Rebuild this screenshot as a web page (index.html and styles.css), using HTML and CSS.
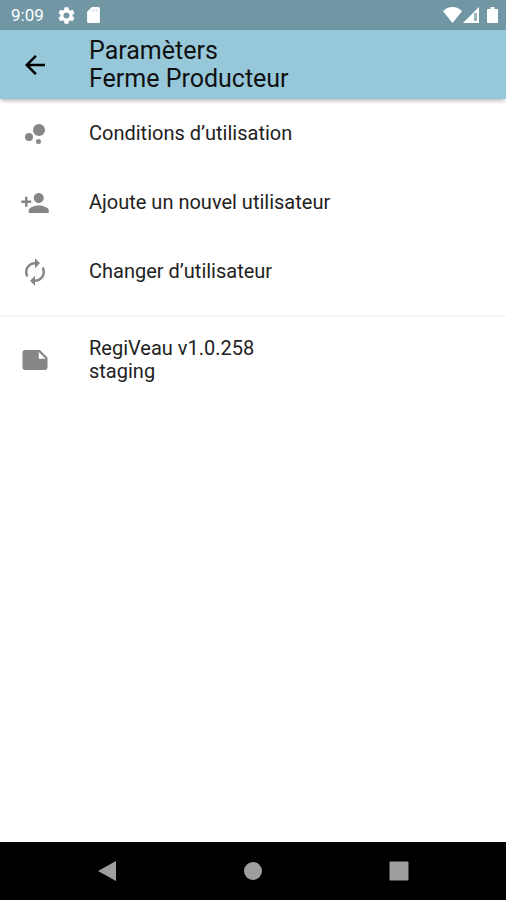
FILE: index.html
```html
<!DOCTYPE html>
<html lang="fr">
 <head>
  <meta charset="utf-8">
  <title>Paramèters</title>
  <meta name="viewport" content="width=device-width,initial-scale=1.0">
  <link rel="stylesheet" href="styles.css">
 </head>
 <body>
  <div class="status">
   <span class="clock">9:09</span>
   <svg class="gear" viewBox="2 2 20 20"><path d="M19.14 12.94c.04-.3.06-.61.06-.94 0-.32-.02-.64-.07-.94l2.03-1.58c.18-.14.23-.41.12-.61l-1.92-3.32c-.12-.22-.37-.29-.59-.22l-2.39.96c-.5-.38-1.03-.7-1.62-.94l-.36-2.54c-.04-.24-.24-.41-.48-.41h-3.84c-.24 0-.43.17-.47.41l-.36 2.54c-.59.24-1.13.57-1.62.94l-2.39-.96c-.22-.08-.47 0-.59.22L2.74 8.87c-.12.21-.08.47.12.61l2.03 1.58c-.05.3-.09.63-.09.94s.02.64.07.94l-2.03 1.58c-.18.14-.23.41-.12.61l1.92 3.32c.12.22.37.29.59.22l2.39-.96c.5.38 1.03.7 1.62.94l.36 2.54c.05.24.24.41.48.41h3.84c.24 0 .44-.17.47-.41l.36-2.54c.59-.24 1.13-.56 1.62-.94l2.39.96c.22.08.47 0 .59-.22l1.92-3.32c.12-.22.07-.47-.12-.61l-2.01-1.58zM12 15.6c-1.98 0-3.6-1.62-3.6-3.6s1.62-3.6 3.6-3.6 3.6 1.62 3.6 3.6-1.62 3.6-3.6 3.6z"/></svg>
   <svg class="card" viewBox="4 2 16 20"><path d="M18 2h-8L4 8v12c0 1.1.9 2 2 2h12c1.1 0 2-.9 2-2V4c0-1.1-.9-2-2-2z"/><path class="slots" d="M10 5v2.500M13 5v2.500M16 5v2.500"/></svg>
   <svg class="wifi" viewBox="0 0 19 16"><path d="M9.500 16L0 4.200C2.500 1.600 5.800 0 9.500 0S16.500 1.600 19 4.200z"/></svg>
   <svg class="signal" viewBox="0 0 16 16"><path d="M0 16L16 0v16h-2V6h-3v8h3v2z"/><path d="M11 6h3v8h-3z" opacity=".3"/></svg>
   <svg class="battery" viewBox="0 0 11 16"><path d="M3.500 0h4v2H10q1 0 1 1v12q0 1-1 1H1q-1 0-1-1V3q0-1 1-1h2.500z"/></svg>
  </div>
  <header class="bar">
   <button class="back" type="button" aria-label="Retour">
    <svg class="icon" viewBox="0 0 24 24"><path d="M20 11H7.830l5.590-5.590L12 4l-8 8 8 8 1.410-1.410L7.830 13H20v-2z"/></svg>
   </button>
   <h1>Paramèters<br>Ferme Producteur</h1>
  </header>
  <main>
   <nav class="menu">
    <a class="item" href="#conditions">
     <svg class="icon" viewBox="0 0 24 24"><circle cx="7.200" cy="14.400" r="3.200"/><circle cx="14.800" cy="18" r="2"/><circle cx="15.200" cy="8.800" r="4.800"/></svg>
     <span>Conditions d’utilisation</span>
    </a>
    <a class="item" href="#ajoute">
     <svg class="icon" viewBox="0 0 24 24"><path d="M15 12c2.210 0 4-1.790 4-4s-1.790-4-4-4-4 1.790-4 4 1.790 4 4 4zm-9-2V7H4v3H1v2h3v3h2v-3h3v-2H6zm9 4c-2.670 0-8 1.340-8 4v2h16v-2c0-2.660-5.330-4-8-4z"/></svg>
     <span>Ajoute un nouvel utilisateur</span>
    </a>
    <a class="item" href="#changer">
     <svg class="icon" viewBox="0 0 24 24"><path d="M12 6v3l4-4-4-4v3c-4.420 0-8 3.580-8 8 0 1.570.46 3.030 1.240 4.260L6.700 14.800c-.45-.83-.7-1.790-.7-2.800 0-3.310 2.690-6 6-6zm6.760 1.740L17.300 9.200c.44.84.7 1.790.7 2.800 0 3.310-2.690 6-6 6v-3l-4 4 4 4v-3c4.420 0 8-3.580 8-8 0-1.570-.46-3.030-1.240-4.260z"/></svg>
     <span>Changer d’utilisateur</span>
    </a>
   </nav>
   <div class="item version">
    <svg class="icon" viewBox="0 0 24 24"><path d="M22 10l-6-6H4c-1.100 0-2 .9-2 2v12.010c0 1.100.9 1.990 2 1.990l16-.01c1.100 0 2-.89 2-1.990v-8zm-7-4.500l5.500 5.500H15V5.500z"/></svg>
    <span>RegiVeau v1.0.258<br>staging</span>
   </div>
  </main>
  <footer class="keys">
   <button type="button" aria-label="Précédent"><svg viewBox="0 0 20 20"><path d="M1 10L19 0v20z"/></svg></button>
   <button type="button" aria-label="Accueil"><svg viewBox="0 0 20 20"><circle cx="10" cy="10" r="9"/></svg></button>
   <button type="button" aria-label="Applications"><svg viewBox="0 0 20 20"><rect x="0.500" y="0.500" width="19" height="19" rx="1"/></svg></button>
  </footer>
 </body>
</html>
```
FILE: styles.css
```css
* {box-sizing:border-box}
body {margin:0; min-height:100vh; display:flex; flex-direction:column; background:#fff; color:#222; font:20px/23px Roboto, sans-serif}
svg {display:block; flex:none; fill:currentColor}
button {margin:0; padding:0; border:none; background:none; color:inherit; cursor:pointer}

.status {display:flex; align-items:center; height:30px; padding:0 8px 0 11px; background:#7197a5; color:#fff}
.clock {font-size:17px; margin-right:14px}
.gear {width:17px; height:17px; margin-right:12px}
.card {width:13px; height:16px}
.slots {stroke:#7197a5; stroke-width:1; opacity:.5}
.wifi {width:19px; height:16px; margin-left:auto}
.signal {width:16px; height:16px; margin:0 8px 0 1px}
.battery {width:11px; height:16px}

.bar {display:flex; align-items:center; gap:39px; min-height:69px; padding:0 20px; background:#97c8da; color:#111; box-shadow:0 3px 4px -1px #0004; z-index:1}
.bar h1 {margin:0; font-size:25px; line-height:28px; font-weight:400}
.bar .back {color:#000}
.icon {width:30px; height:30px}

main {flex:1}
.menu {padding-bottom:9px; border-bottom:2px solid #f6f6f6}
.item {display:flex; align-items:center; gap:39px; min-height:69px; padding:0 20px; color:inherit; text-decoration:none}
.item .icon {color:#868686}
.version {min-height:86px}

.keys {display:flex; justify-content:center; gap:126px; height:58px; background:#000; color:#9e9e9e}
.keys svg {width:20px; height:20px}
```
